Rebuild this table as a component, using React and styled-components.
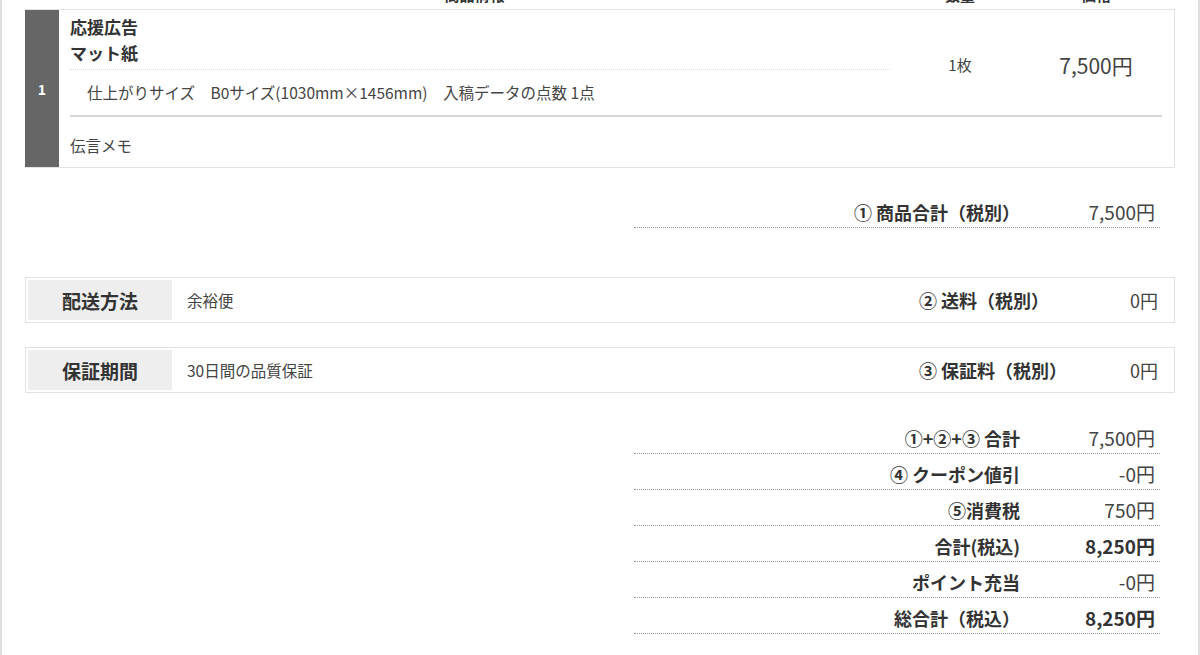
import React from "react";
import styled, { createGlobalStyle } from "styled-components";

const GlobalStyle = createGlobalStyle`
  body {
    margin: 0;
    background: #fff;
    color: #333;
    font-family: "Noto Sans CJK JP", "Noto Sans", sans-serif;
  }
`;

const Page = styled.div`
  box-sizing: border-box;
  min-height: 655px;
  border-left: 2px solid #ddd;
  border-right: 2px solid #ddd;
  padding: 0 23px;
  overflow: hidden;
`;

const HeadRow = styled.div`
  display: grid;
  grid-template-columns: 34px 1fr 140px 132px;
  padding-right: 13px;
  margin-top: -19px;
  font-size: 15px;
  font-weight: 700;
  line-height: 28px;
  text-align: center;
`;

const Card = styled.div`
  display: flex;
  border: 1px solid #e2e2e2;
  border-left: none;
`;

const NumberCell = styled.div`
  width: 34px;
  flex-shrink: 0;
  background: #666;
  color: #fff;
  font-size: 14px;
  font-weight: 700;
  display: flex;
  align-items: center;
  justify-content: center;
`;

const CardBody = styled.div`
  flex: 1;
  padding: 0 12px 0 11px;
`;

const ItemTop = styled.div`
  display: grid;
  grid-template-columns: 1fr 140px 132px;
  align-items: center;
`;

const ItemInfo = styled.div`
  padding-top: 4px;
`;

const ItemName = styled.div`
  font-size: 17px;
  font-weight: 700;
  line-height: 26px;
  padding-bottom: 3px;
  border-bottom: 1px dotted #ddd;
`;

const Specs = styled.div`
  font-size: 15.5px;
  line-height: 26px;
  color: #444;
  padding: 9px 0 10px 17px;
  white-space: pre;
`;

const Qty = styled.div`
  font-size: 15px;
  color: #444;
  text-align: center;
  padding-top: 3px;
`;

const Price = styled.div`
  font-size: 21px;
  color: #444;
  text-align: center;
  padding-top: 4px;
`;

const Memo = styled.div`
  border-top: 2px solid #d6d6d6;
  padding: 15px 0 9px;
  font-size: 15.5px;
  line-height: 26px;
  color: #444;
`;

const Summary = styled.div`
  width: 526px;
  margin: ${(p) => p.$top}px 15px 0 auto;
`;

const SumRow = styled.div`
  display: flex;
  align-items: center;
  padding: 7px 0 2px;
  border-bottom: 1px dotted #9a9a9a;
  line-height: 26px;
`;

const SumLabel = styled.div`
  flex: 1;
  text-align: right;
  font-size: 18px;
  font-weight: 700;
  color: #333;
`;

const SumValue = styled.div`
  width: 135px;
  padding-right: 5px;
  text-align: right;
  font-size: 19px;
  font-weight: ${(p) => (p.$bold ? 700 : 400)};
  color: ${(p) => (p.$bold ? "#333" : "#444")};
`;

const InfoBox = styled.div`
  display: flex;
  align-items: center;
  margin-top: ${(p) => p.$top}px;
  padding: 2px;
  border: 1px solid #e2e2e2;
`;

const InfoLabel = styled.div`
  width: 144px;
  height: 40px;
  background: #eee;
  display: flex;
  align-items: center;
  justify-content: center;
  font-size: 19px;
  font-weight: 700;
  color: #333;
`;

const InfoValue = styled.div`
  flex: 1;
  margin-left: 15px;
  font-size: 15.5px;
  color: #444;
`;

const FeeLabel = styled.div`
  width: 179px;
  font-size: 18px;
  font-weight: 700;
  color: #333;
`;

const FeeValue = styled.div`
  width: 60px;
  margin-right: 14px;
  text-align: right;
  font-size: 18px;
  color: #444;
`;

const totals = [
  { label: "①+②+③ 合計", value: "7,500円" },
  { label: "④ クーポン値引", value: "-0円" },
  { label: "⑤消費税", value: "750円" },
  { label: "合計(税込)", value: "8,250円", bold: true },
  { label: "ポイント充当", value: "-0円" },
  { label: "総合計（税込）", value: "8,250円", bold: true },
];

export default function App() {
  return (
    <>
      <GlobalStyle />
      <Page>
        <HeadRow>
          <span />
          <span>商品情報</span>
          <span>数量</span>
          <span>価格</span>
        </HeadRow>
        <Card>
          <NumberCell>1</NumberCell>
          <CardBody>
            <ItemTop>
              <ItemInfo>
                <ItemName>
                  応援広告
                  <br />
                  マット紙
                </ItemName>
                <Specs>仕上がりサイズ　B0サイズ(1030mm×1456mm)　入稿データの点数 1点</Specs>
              </ItemInfo>
              <Qty>1枚</Qty>
              <Price>7,500円</Price>
            </ItemTop>
            <Memo>伝言メモ</Memo>
          </CardBody>
        </Card>

        <Summary $top={24}>
          <SumRow>
            <SumLabel>① 商品合計（税別）</SumLabel>
            <SumValue>7,500円</SumValue>
          </SumRow>
        </Summary>

        <InfoBox $top={49}>
          <InfoLabel>配送方法</InfoLabel>
          <InfoValue>余裕便</InfoValue>
          <FeeLabel>② 送料（税別）</FeeLabel>
          <FeeValue>0円</FeeValue>
        </InfoBox>
        <InfoBox $top={24}>
          <InfoLabel>保証期間</InfoLabel>
          <InfoValue>30日間の品質保証</InfoValue>
          <FeeLabel>③ 保証料（税別）</FeeLabel>
          <FeeValue>0円</FeeValue>
        </InfoBox>

        <Summary $top={25}>
          {totals.map((t) => (
            <SumRow key={t.label}>
              <SumLabel>{t.label}</SumLabel>
              <SumValue $bold={t.bold}>{t.value}</SumValue>
            </SumRow>
          ))}
        </Summary>
      </Page>
    </>
  );
}
